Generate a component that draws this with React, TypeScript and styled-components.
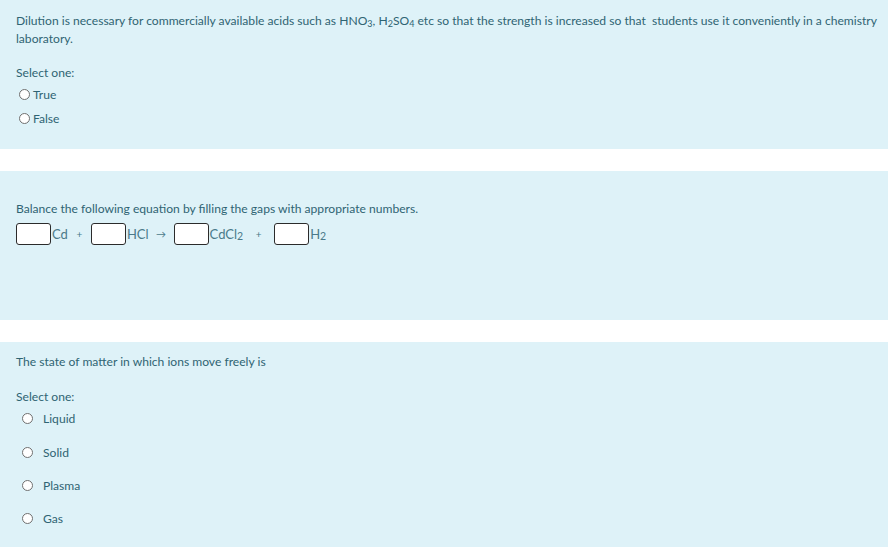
import React from "react";
import styled, { createGlobalStyle } from "styled-components";

const GlobalStyle = createGlobalStyle`
  html, body {
    margin: 0;
    padding: 0;
    background: #ffffff;
  }
  body {
    font-family: Lato, "Open Sans", sans-serif;
    color: #2f6473;
  }
`;

type Option = { label: string };

const trueFalse: Option[] = [{ label: "True" }, { label: "False" }];
const states: Option[] = [
  { label: "Liquid" },
  { label: "Solid" },
  { label: "Plasma" },
  { label: "Gas" },
];

const App = () => {
  return (
    <Page>
      <GlobalStyle />
      <Card height={149} padTop={12}>
        <QText>
          Dilution is necessary for commercially available acids such as HNO
          <Sub>3</Sub>, H<Sub>2</Sub>SO<Sub>4</Sub> etc so that the strength is
          increased so that&nbsp; students use it conveniently in a chemistry
          <br />
          laboratory.
        </QText>
        <Prompt gap={16}>Select one:</Prompt>
        <AnswerList offset={0}>
          {trueFalse.map((o) => (
            <AnswerRow key={o.label} rowHeight={24} indent={3} labelGap={3}>
              <Radio />
              <AnswerLabel>{o.label}</AnswerLabel>
            </AnswerRow>
          ))}
        </AnswerList>
      </Card>

      <Card height={149} padTop={29}>
        <QText>
          Balance the following equation by filling the gaps with appropriate
          numbers.
        </QText>
        <Equation>
          <GapInput />
          <Species>Cd</Species>
          <Operator slot={23}>+</Operator>
          <GapInput />
          <Species>HCl</Species>
          <Operator slot={25}>→</Operator>
          <GapInput />
          <Species>
            CdCl<Small>2</Small>
          </Species>
          <Operator slot={31}>+</Operator>
          <GapInput />
          <Species>
            H<Small>2</Small>
          </Species>
        </Equation>
      </Card>

      <Card height={205} padTop={11}>
        <QText>The state of matter in which ions move freely is</QText>
        <Prompt gap={17}>Select one:</Prompt>
        <AnswerList offset={-4}>
          {states.map((o) => (
            <AnswerRow key={o.label} rowHeight={33.4} indent={6} labelGap={10}>
              <Radio />
              <AnswerLabel>{o.label}</AnswerLabel>
            </AnswerRow>
          ))}
        </AnswerList>
      </Card>
    </Page>
  );
};

const Page = styled.div`
  width: 888px;
  display: flex;
  flex-direction: column;
  gap: 22px;
`;

const Card = styled.div<{ height: number; padTop: number }>`
  box-sizing: border-box;
  height: ${(p) => p.height}px;
  padding: ${(p) => p.padTop}px 15px 0 16px;
  background-color: #def2f8;
  display: flex;
  flex-direction: column;
`;

const QText = styled.div`
  font-size: 12.1px;
  line-height: 18px;
  white-space: nowrap;
`;

const Sub = styled.sub`
  font-size: 9px;
  line-height: 0;
  vertical-align: -2px;
`;

const Prompt = styled.div<{ gap: number }>`
  margin-top: ${(p) => p.gap}px;
  font-size: 12.1px;
  line-height: 18px;
`;

const AnswerList = styled.div<{ offset: number }>`
  display: flex;
  flex-direction: column;
  margin-top: ${(p) => p.offset}px;
`;

const AnswerRow = styled.label<{
  rowHeight: number;
  indent: number;
  labelGap: number;
}>`
  display: flex;
  align-items: center;
  height: ${(p) => p.rowHeight}px;
  padding-left: ${(p) => p.indent}px;
  gap: ${(p) => p.labelGap}px;
`;

const Radio = styled.span`
  box-sizing: border-box;
  width: 11px;
  height: 11px;
  border-radius: 50%;
  border: 1px solid #707070;
  background: #ffffff;
  flex: none;
`;

const AnswerLabel = styled.span`
  font-size: 12.1px;
`;

const Equation = styled.div`
  display: flex;
  align-items: center;
  margin-top: 5px;
  height: 22px;
`;

const GapInput = styled.span`
  box-sizing: border-box;
  width: 35px;
  height: 22px;
  border: 1px solid #2b2b2b;
  border-radius: 3px;
  background: #ffffff;
  flex: none;
`;

const Species = styled.span`
  font-size: 13px;
  color: #4a7a8a;
  margin-left: 1px;
`;

const Small = styled.span`
  font-size: 10.5px;
  vertical-align: -1px;
`;

const Operator = styled.span<{ slot: number }>`
  width: ${(p) => p.slot}px;
  text-align: center;
  font-size: 10px;
  color: #4a7a8a;
  flex: none;
`;

export default App;
